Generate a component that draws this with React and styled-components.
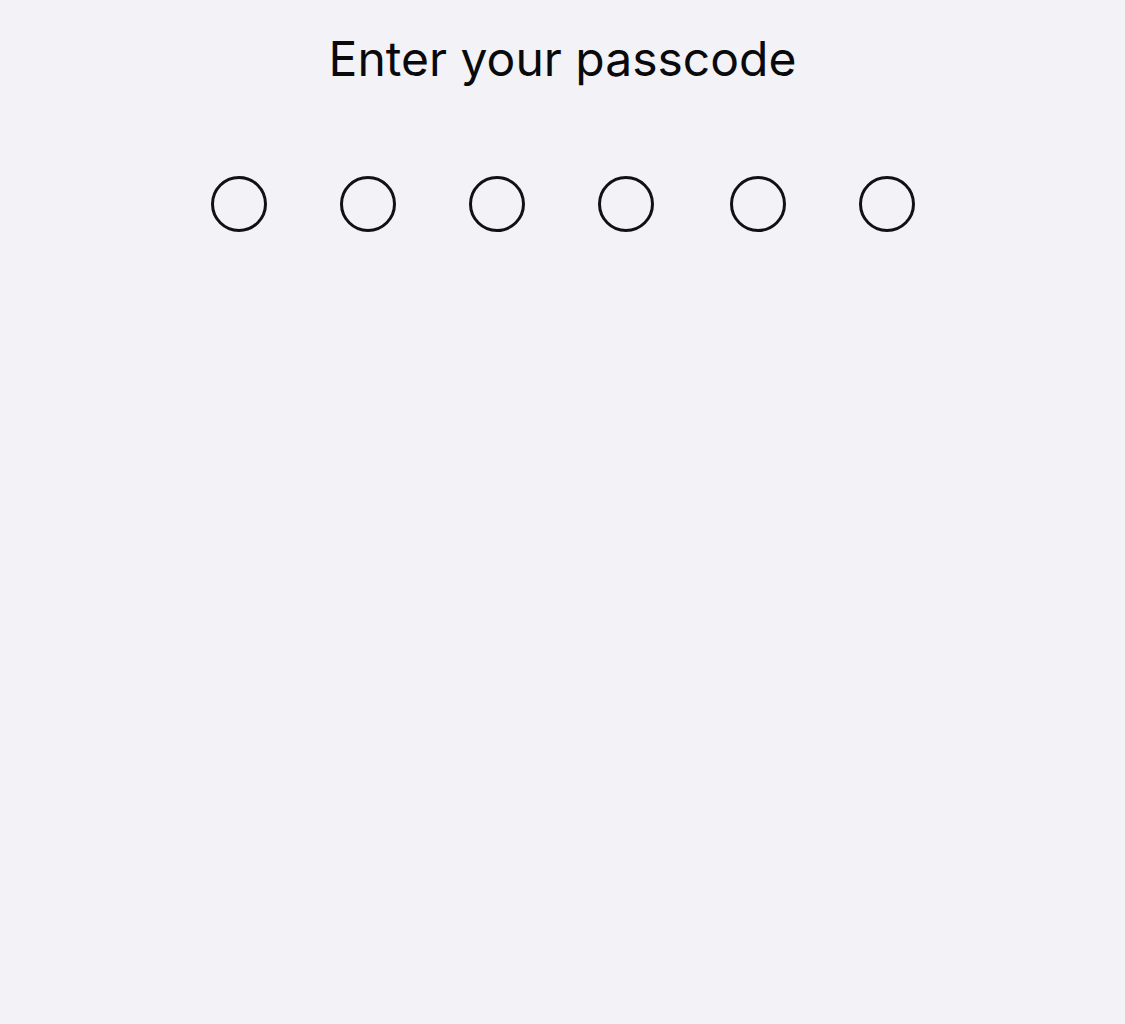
import React from "react";
import styled, { createGlobalStyle } from "styled-components";

const Global = createGlobalStyle`
  html, body {
    margin: 0;
    padding: 0;
    background: #f2f2f7;
  }
  body {
    font-family: Inter, "Noto Sans", "Liberation Sans", sans-serif;
  }
`;

const Screen = styled.div`
  width: 1125px;
  height: 1024px;
  background: #f2f2f7;
  display: flex;
  flex-direction: column;
  align-items: center;
  box-sizing: border-box;
  padding-top: 27px;
`;

const Title = styled.h1`
  margin: 0;
  font-family: Inter, "Noto Sans", sans-serif;
  font-weight: 400;
  font-size: 48px;
  line-height: 64px;
  letter-spacing: 0px;
  color: #0a0a0c;
`;

const Dots = styled.div`
  display: flex;
  align-items: center;
  margin-top: 85px;
`;

const Dot = styled.div`
  width: 56px;
  height: 56px;
  box-sizing: border-box;
  border: 3px solid #111114;
  border-radius: 50%;
  margin-left: ${(p) => p.$gap}px;
  &:first-child {
    margin-left: 0;
  }
`;

const gaps = [0, 73, 73, 73, 76, 73];

export default function App() {
  return (
    <>
      <Global />
      <Screen>
        <Title>Enter your passcode</Title>
        <Dots>
          {gaps.map((g, i) => (
            <Dot key={i} $gap={g} />
          ))}
        </Dots>
      </Screen>
    </>
  );
}
